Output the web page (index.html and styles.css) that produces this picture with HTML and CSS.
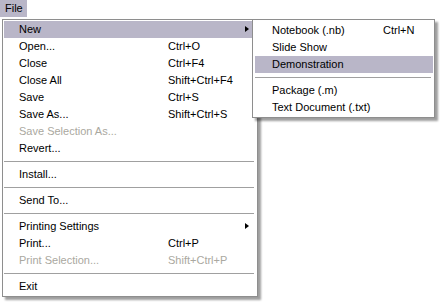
FILE: index.html
```html
<!DOCTYPE html>
<html>
<head>
<meta charset="utf-8">
<link rel="stylesheet" href="styles.css">
</head>
<body>
<div class="menubar">
  <div class="bar-item active">File</div>
</div>

<div class="menu main-menu">
  <div class="item hl"><span class="label">New</span><span class="key"></span><span class="arrow"></span></div>
  <div class="item"><span class="label">Open...</span><span class="key">Ctrl+O</span></div>
  <div class="item"><span class="label">Close</span><span class="key">Ctrl+F4</span></div>
  <div class="item"><span class="label">Close All</span><span class="key">Shift+Ctrl+F4</span></div>
  <div class="item"><span class="label">Save</span><span class="key">Ctrl+S</span></div>
  <div class="item"><span class="label">Save As...</span><span class="key">Shift+Ctrl+S</span></div>
  <div class="item disabled"><span class="label">Save Selection As...</span><span class="key"></span></div>
  <div class="item"><span class="label">Revert...</span><span class="key"></span></div>
  <div class="sep"></div>
  <div class="item"><span class="label">Install...</span><span class="key"></span></div>
  <div class="sep"></div>
  <div class="item"><span class="label">Send To...</span><span class="key"></span></div>
  <div class="sep"></div>
  <div class="item"><span class="label">Printing Settings</span><span class="key"></span><span class="arrow"></span></div>
  <div class="item"><span class="label">Print...</span><span class="key">Ctrl+P</span></div>
  <div class="item disabled"><span class="label">Print Selection...</span><span class="key">Shift+Ctrl+P</span></div>
  <div class="sep"></div>
  <div class="item"><span class="label">Exit</span><span class="key"></span></div>
</div>

<div class="menu sub-menu">
  <div class="item"><span class="label">Notebook (.nb)</span><span class="key">Ctrl+N</span></div>
  <div class="item"><span class="label">Slide Show</span><span class="key"></span></div>
  <div class="item hl"><span class="label">Demonstration</span><span class="key"></span></div>
  <div class="sep"></div>
  <div class="item"><span class="label">Package (.m)</span><span class="key"></span></div>
  <div class="item"><span class="label">Text Document (.txt)</span><span class="key"></span></div>
</div>
</body>
</html>
```

FILE: styles.css
```css
html, body {
  margin: 0;
  padding: 0;
  background: #ffffff;
}
body {
  width: 440px;
  height: 303px;
  position: relative;
  overflow: hidden;
  font-family: "Liberation Sans", Arial, sans-serif;
  font-size: 11px;
  color: #000000;
}
.menubar {
  display: flex;
  height: 18px;
}
.bar-item {
  width: 27px;
  height: 17px;
  line-height: 17px;
  padding-left: 5px;
  box-sizing: border-box;
}
.bar-item.active {
  background: #b9b6c8;
}
.menu {
  position: absolute;
  background: #ffffff;
  border: 1px solid #8e8e8e;
  box-shadow: 3px 3px 2px rgba(0, 0, 0, 0.38);
  box-sizing: border-box;
}
.main-menu {
  left: 2px;
  top: 19px;
  width: 256px;
  padding: 1px 1px 1px 1px;
}
.sub-menu {
  left: 252px;
  top: 19px;
  width: 183px;
  padding: 2px 1px 1px 2px;
}
.item {
  display: flex;
  align-items: center;
  height: 17px;
  line-height: 17px;
  padding-left: 15px;
  position: relative;
  white-space: nowrap;
}
.main-menu .label {
  width: 149px;
}
.sub-menu .item {
  padding-left: 17px;
}
.sub-menu .label {
  width: 111px;
}
.item.hl {
  background: #b9b6c8;
}
.item.disabled {
  color: #aaa8a0;
}
.arrow {
  position: absolute;
  right: 7px;
  top: 5px;
  width: 0;
  height: 0;
  border-top: 3.5px solid transparent;
  border-bottom: 3.5px solid transparent;
  border-left: 4px solid #000000;
}
.sep {
  height: 9px;
  position: relative;
}
.sep::after {
  content: "";
  position: absolute;
  left: 0;
  right: 2px;
  top: 4px;
  height: 1px;
  background: #a0a0a0;
}
```
